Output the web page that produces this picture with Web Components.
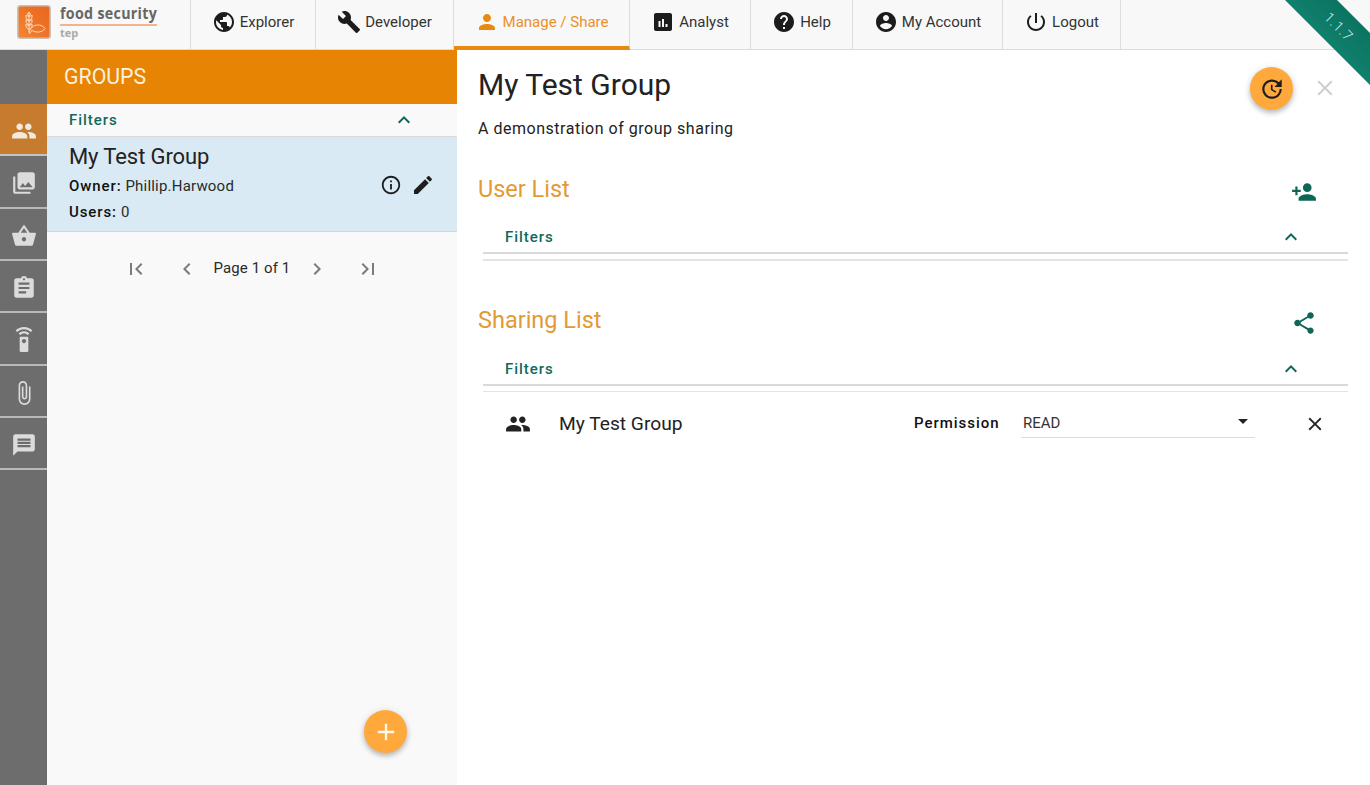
<!DOCTYPE html>
<html lang="en">
<head>
<meta charset="utf-8">
<title>Food Security TEP</title>
<style>
html,body{margin:0;padding:0;height:100%;overflow:hidden;background:#fff;font-family:Roboto,"Liberation Sans",sans-serif;color:#222}
</style>
</head>
<body>
<tep-app></tep-app>
<script>
const P={
people:'M16 11c1.66 0 2.99-1.34 2.99-3S17.66 5 16 5c-1.66 0-3 1.34-3 3s1.34 3 3 3zm-8 0c1.66 0 2.99-1.34 2.99-3S9.66 5 8 5C6.34 5 5 6.34 5 8s1.34 3 3 3zm0 2c-2.33 0-7 1.17-7 3.5V19h14v-2.5c0-2.33-4.67-3.5-7-3.5zm8 0c-.29 0-.62.02-.97.05 1.16.84 1.97 1.97 1.97 3.45V19h6v-2.5c0-2.33-4.67-3.5-7-3.5z',
public:'M12 2C6.48 2 2 6.48 2 12s4.48 10 10 10 10-4.48 10-10S17.52 2 12 2zm-1 17.93c-3.95-.49-7-3.85-7-7.93 0-.62.08-1.21.21-1.79L9 15v1c0 1.1.9 2 2 2v1.93zm6.9-2.54c-.26-.81-1-1.39-1.9-1.39h-1v-3c0-.55-.45-1-1-1H8v-2h2c.55 0 1-.45 1-1V7h2c1.1 0 2-.9 2-2v-.41c2.93 1.19 5 4.06 5 7.41 0 2.08-.8 3.97-2.1 5.39z',
build:'M22.7 19l-9.1-9.1c.9-2.3.4-5-1.5-6.9-2-2-5-2.4-7.4-1.3L9 6 6 9 1.6 4.7C.4 7.1.9 10.1 2.9 12.1c1.9 1.9 4.6 2.4 6.9 1.5l9.1 9.1c.4.4 1 .4 1.4 0l2.3-2.3c.5-.4.5-1.1.1-1.4z',
person:'M12 12c2.21 0 4-1.79 4-4s-1.79-4-4-4-4 1.79-4 4 1.79 4 4 4zm0 2c-2.67 0-8 1.34-8 4v2h16v-2c0-2.66-5.33-4-8-4z',
poll:'M19 3H5c-1.1 0-2 .9-2 2v14c0 1.1.9 2 2 2h14c1.1 0 2-.9 2-2V5c0-1.1-.9-2-2-2zM9.5 17h-2v-6h2v6zm3.5 0h-2V9h2v8zm3.5 0h-2v-3h2v3z',
help:'M12 2C6.48 2 2 6.48 2 12s4.48 10 10 10 10-4.48 10-10S17.52 2 12 2zm1 17h-2v-2h2v2zm2.07-7.75l-.9.92C13.45 12.9 13 13.5 13 15h-2v-.5c0-1.1.45-2.1 1.17-2.83l1.24-1.26c.37-.36.59-.86.59-1.41 0-1.1-.9-2-2-2s-2 .9-2 2H8c0-2.21 1.79-4 4-4s4 1.79 4 4c0 .88-.36 1.68-.93 2.25z',
account:'M12 2C6.48 2 2 6.48 2 12s4.48 10 10 10 10-4.48 10-10S17.52 2 12 2zm0 3c1.66 0 3 1.34 3 3s-1.34 3-3 3-3-1.34-3-3 1.34-3 3-3zm0 14.2c-2.5 0-4.71-1.28-6-3.22.03-1.99 4-3.08 6-3.08 1.99 0 5.97 1.09 6 3.08-1.29 1.94-3.5 3.22-6 3.22z',
power:'M13 3h-2v10h2V3zm4.83 2.17l-1.42 1.42C17.99 7.86 19 9.81 19 12c0 3.87-3.13 7-7 7s-7-3.13-7-7c0-2.19 1.01-4.14 2.58-5.42L6.17 5.17C4.23 6.82 3 9.26 3 12c0 4.97 4.03 9 9 9s9-4.03 9-9c0-2.74-1.23-5.18-3.17-6.83z',
collections:'M22 16V4c0-1.1-.9-2-2-2H8c-1.1 0-2 .9-2 2v12c0 1.1.9 2 2 2h12c1.1 0 2-.9 2-2zm-11-4l2.03 2.71L16 11l4 5H8l3-4zM2 6v14c0 1.1.9 2 2 2h14v-2H4V6H2z',
basket:'M17.21 9l-4.38-6.56c-.19-.28-.51-.42-.83-.42-.32 0-.64.14-.83.43L6.79 9H2c-.55 0-1 .45-1 1 0 .09.01.18.04.27l2.54 9.27c.23.84 1 1.46 1.92 1.46h13c.92 0 1.69-.62 1.93-1.46l2.54-9.27L23 10c0-.55-.45-1-1-1h-4.79zM9 9l3-4.4L15 9H9zm3 8c-1.1 0-2-.9-2-2s.9-2 2-2 2 .9 2 2-.9 2-2 2z',
assignment:'M19 3h-4.18C14.4 1.84 13.3 1 12 1c-1.3 0-2.4.84-2.82 2H5c-1.1 0-2 .9-2 2v14c0 1.1.9 2 2 2h14c1.1 0 2-.9 2-2V5c0-1.1-.9-2-2-2zm-7 0c.55 0 1 .45 1 1s-.45 1-1 1-1-.45-1-1 .45-1 1-1zm2 14H7v-2h7v2zm3-4H7v-2h10v2zm0-4H7V7h10v2z',
remote:'M15 9H9c-.55 0-1 .45-1 1v12c0 .55.45 1 1 1h6c.55 0 1-.45 1-1V10c0-.55-.45-1-1-1zm-3 6c-1.1 0-2-.9-2-2s.9-2 2-2 2 .9 2 2-.9 2-2 2zM7.05 6.05l1.41 1.41C9.37 6.56 10.62 6 12 6s2.63.56 3.54 1.46l1.41-1.41C15.68 4.78 13.93 4 12 4s-3.68.78-4.95 2.05zM12 0C8.96 0 6.21 1.23 4.22 3.22l1.41 1.41C7.26 3.01 9.51 2 12 2s4.74 1.01 6.36 2.64l1.41-1.41C17.79 1.23 15.04 0 12 0z',
attach:'M16.5 6v11.5c0 2.21-1.79 4-4 4s-4-1.79-4-4V5c0-1.38 1.12-2.5 2.5-2.5s2.5 1.12 2.5 2.5v10.5c0 .55-.45 1-1 1s-1-.45-1-1V6H10v9.5c0 1.38 1.12 2.5 2.5 2.5s2.5-1.12 2.5-2.5V5c0-2.21-1.79-4-4-4S7 2.79 7 5v12.5c0 3.04 2.46 5.5 5.5 5.5s5.5-2.46 5.5-5.5V6h-1.5z',
message:'M20 2H4c-1.1 0-1.99.9-1.99 2L2 22l4-4h14c1.1 0 2-.9 2-2V4c0-1.1-.9-2-2-2zm-2 12H6v-2h12v2zm0-3H6V9h12v2zm0-3H6V6h12v2z',
less:'M12 8l-6 6 1.41 1.41L12 10.83l4.59 4.58L18 14z',
info:'M11 7h2v2h-2zm0 4h2v6h-2zm1-9C6.48 2 2 6.48 2 12s4.48 10 10 10 10-4.48 10-10S17.52 2 12 2zm0 18c-4.41 0-8-3.59-8-8s3.59-8 8-8 8 3.59 8 8-3.59 8-8 8z',
edit:'M3 17.25V21h3.75L17.81 9.94l-3.75-3.75L3 17.25zM20.71 7.04c.39-.39.39-1.02 0-1.41l-2.34-2.34c-.39-.39-1.02-.39-1.41 0l-1.83 1.83 3.75 3.75 1.83-1.83z',
first:'M18.41 16.59L13.82 12l4.59-4.59L17 6l-6 6 6 6zM6 6h2v12H6z',
last:'M5.59 7.41L10.18 12l-4.59 4.59L7 18l6-6-6-6zM16 6h2v12h-2z',
prev:'M15.41 7.41L14 6l-6 6 6 6 1.41-1.41L10.83 12z',
next:'M10 6L8.59 7.41 13.17 12l-4.58 4.59L10 18l6-6z',
personadd:'M15 12c2.21 0 4-1.79 4-4s-1.79-4-4-4-4 1.79-4 4 1.79 4 4 4zm-9-2V7H4v3H1v2h3v3h2v-3h3v-2H6zm9 4c-2.67 0-8 1.34-8 4v2h16v-2c0-2.66-5.33-4-8-4z',
share:'M18 16.08c-.76 0-1.44.3-1.96.77L8.91 12.7c.05-.23.09-.46.09-.7s-.04-.47-.09-.7l7.05-4.11c.54.5 1.25.81 2.04.81 1.66 0 3-1.34 3-3s-1.34-3-3-3-3 1.34-3 3c0 .24.04.47.09.7L8.04 9.81C7.5 9.31 6.79 9 6 9c-1.66 0-3 1.34-3 3s1.34 3 3 3c.79 0 1.5-.31 2.04-.81l7.12 4.16c-.05.21-.08.43-.08.65 0 1.61 1.31 2.92 2.92 2.92 1.61 0 2.92-1.31 2.92-2.92s-1.31-2.92-2.92-2.92z',
close:'M19 6.41L17.59 5 12 10.59 6.41 5 5 6.41 10.59 12 5 17.59 6.41 19 12 13.41 17.59 19 19 17.59 13.41 12z',
add:'M19 13h-6v6h-2v-6H5v-2h6V5h2v6h6v2z',
drop:'M7 10l5 5 5-5z',
update:'M21 10.12h-6.78l2.74-2.82c-2.73-2.7-7.15-2.8-9.88-.1-2.73 2.71-2.73 7.08 0 9.79s7.15 2.71 9.88 0C18.32 15.65 19 14.08 19 12.1h2c0 1.98-.88 4.55-2.64 6.29-3.51 3.48-9.21 3.48-12.72 0-3.5-3.47-3.53-9.11-.02-12.58s9.14-3.47 12.65 0L21 3v7.12zM12.5 8v4.25l3.5 2.08-.72 1.21L11 13V8h1.5z'
};
function def(name,html,init){
  const t=document.createElement('template');t.innerHTML=html;
  customElements.define(name,class extends HTMLElement{
    connectedCallback(){
      if(this.shadowRoot)return;
      const r=this.attachShadow({mode:'open'});
      const f=t.content.cloneNode(true);
      if(init)init(this,f);
      r.appendChild(f);
    }
  });
}
def('m-icon',`<style>:host{display:inline-flex;width:var(--s,24px);height:var(--s,24px);flex:none;color:inherit}svg{width:100%;height:100%;display:block;fill:currentColor}</style><svg viewBox="0 0 24 24"><path></path></svg>`,
(h,r)=>{r.querySelector('path').setAttribute('d',P[h.getAttribute('name')]||'');});

def('tep-logo',`<style>
:host{display:flex;width:190px;height:49px;flex:none;box-sizing:border-box;padding:5px 0 0 17px;gap:9px}
svg{width:34px;height:34px;display:block;flex:none}
.t{display:flex;flex-direction:column;width:97px;margin-top:-1px}
.a{font:700 16px/19px "Open Sans",sans-serif;color:#666;white-space:nowrap;transform-origin:0 50%;transform:scaleX(.89);letter-spacing:.35px}
.r{height:2px;background:#f3b393;margin-top:1px}
.b{font:700 11px/14px "Open Sans",sans-serif;color:#aaa;margin-top:0}
</style>
<svg viewBox="0 0 34 34"><defs><linearGradient id="g" x1="1" y1="0" x2="0" y2="1"><stop offset="0" stop-color="#e8651f"/><stop offset=".5" stop-color="#ee7426"/><stop offset="1" stop-color="#f58634"/></linearGradient></defs>
<rect x=".8" y=".8" width="32.4" height="32.4" rx="2.5" fill="url(#g)" stroke="#c9c2bb" stroke-width="1.6"/>
<g fill="none" stroke="#fbd9bd" stroke-width="1"><path d="M12 7V27M12 12l-3-2v3l3 2.5M12 12l3-2v3l-3 2.5M12 16.5l-3-2v3l3 2.5M12 16.5l3-2v3l-3 2.5M12 21l-3-2v3l3 2.5M12 21l3-2v3l-3 2.5"/><path d="M12 7l-1.5 2 1.5 2 1.5-2z"/><path d="M13 25c2.5-4.5 7-6 11-4.5 2 .8 3.5 2 4 3-1.5 2.5-5 4-8.5 3.5-2-.2-3.6-.8-4.5-1.8-.8 1.3-1.5 2.8-2.5 3.3-.5-1-.6-2.4.5-3.5z"/></g></svg>
<div class="t"><div class="a">food security</div><div class="r"></div><div class="b">tep</div></div>`);

def('nav-item',`<style>
:host{display:flex;align-items:center;justify-content:center;gap:4px;box-sizing:border-box;height:49px;border-right:1px solid #dcdcdc;font:400 15px/20px Roboto,sans-serif;color:#333;flex:none;padding-bottom:5px}
:host([active]){color:#e8902a;border-bottom:4px solid #e88a12;height:50px;padding-bottom:2px;--ic:#e88a12}
m-icon{color:var(--ic,#1c1c1c)}
</style><m-icon></m-icon><slot></slot>`,(h,r)=>{r.querySelector('m-icon').setAttribute('name',h.getAttribute('icon'));});

def('top-nav',`<style>
:host{display:flex;height:50px;flex:none;background:#f8f8f8;box-sizing:border-box;border-bottom:1px solid #dcdcdc}
</style><slot></slot>`);

def('version-ribbon',`<style>
:host{position:absolute;top:0;right:0;width:85px;height:85px;overflow:hidden;pointer-events:none;display:block}
.b{position:absolute;inset:0;clip-path:polygon(0 0,52px 0,85px 33px,85px 85px);background:linear-gradient(45deg,#15907a,#0a6e5c)}
.t{position:absolute;left:37px;top:17px;width:32px;text-align:center;transform:rotate(45deg);font:300 14px/18px Roboto,sans-serif;color:#e3f0ed;letter-spacing:.8px}
</style><div class="b"></div><div class="t"><slot></slot></div>`);

def('rail-item',`<style>
:host{display:flex;align-items:center;justify-content:center;box-sizing:border-box;height:52.33px;padding-top:4px;border-bottom:2px solid #b9b9b9;color:#dcdcdc;--s:26px}
:host([active]){background:#c77b2e;color:#f3eadf;border-bottom-color:#c3c3c3}
:host([blank]){height:54px;border:0;padding:0}
</style><slot></slot>`);
def('side-rail',`<style>:host{display:flex;flex-direction:column;width:47px;flex:none;background:#6d6d6d}</style><slot></slot>`);

def('filter-bar',`<style>
:host{display:flex;align-items:center;box-sizing:border-box;height:var(--h,33px);padding:var(--pt,0) var(--pr,41px) 0 var(--pl,22px);border-bottom:var(--bb,1px) solid #d9d9d9;font:500 15px/20px Roboto,sans-serif;letter-spacing:.95px;color:#12695b}
span{flex:1}
m-icon{color:#0d6656;--s:24px}
</style><span><slot></slot></span><m-icon name="less"></m-icon>`);

def('group-card',`<style>
:host{display:flex;align-items:center;box-sizing:border-box;height:95px;background:#d9eaf5;border-bottom:1px solid #cfd6da;padding:0 22px;color:#1e1e1e}
.m{flex:1;min-width:0;padding-top:4px}
.t{font:400 22px/26px Roboto,sans-serif;margin-top:-7px;letter-spacing:-.1px;color:#222}
.l{font:400 15px/20px Roboto,sans-serif;letter-spacing:.2px;margin-top:6px;color:#2a2a2a}
.l+.l{margin-top:6px}
b{font-weight:500;letter-spacing:.9px;color:#111}
.a{display:flex;gap:8px;margin-top:1px}
.a m-icon:first-child{--s:22px;margin:1px 1px 0 1px}
</style>
<div class="m"><div class="t"><slot name="title"></slot></div><div class="l"><b>Owner:</b> <slot name="owner"></slot></div><div class="l"><b>Users:</b> <slot name="users"></slot></div></div>
<div class="a"><m-icon name="info"></m-icon><m-icon name="edit"></m-icon></div>`);

def('page-nav',`<style>
:host{display:flex;align-items:center;height:24px;margin-top:25px;padding-left:77px;font:400 15px/20px Roboto,sans-serif;color:#2a2a2a;letter-spacing:.1px}
m-icon{color:#7b7b7b}
span{width:106px;text-align:center;margin:-3px 0 0;white-space:nowrap}
.g{width:27px}
</style><m-icon name="first"></m-icon><div class="g"></div><m-icon name="prev"></m-icon><span><slot></slot></span><m-icon name="next"></m-icon><div class="g"></div><m-icon name="last"></m-icon>`);

def('fab-button',`<style>
:host{display:flex;align-items:center;justify-content:center;width:43px;height:43px;border-radius:50%;background:#ffa93c;box-shadow:0 3px 5px rgba(0,0,0,.22),0 1px 8px rgba(0,0,0,.1);flex:none;color:var(--fc,#1e1e1e)}
</style><slot></slot>`);

def('groups-panel',`<style>
:host{display:flex;flex-direction:column;position:relative;width:410px;flex:none;background:#f9f9f9}
.h{height:54px;box-sizing:border-box;background:#e88403;color:#fdf0dc;font:400 21.3px/54px Roboto,sans-serif;padding-left:17px;flex:none}
.add{position:absolute;left:317px;top:660px;--fc:#fff8ee;--s:28px}
</style><div class="h">GROUPS</div><filter-bar>Filters</filter-bar>
<group-card><span slot="title">My Test Group</span><span slot="owner">Phillip.Harwood</span><span slot="users">0</span></group-card>
<page-nav>Page 1 of 1</page-nav>
<fab-button class="add"><m-icon name="add"></m-icon></fab-button>`);

def('section-head',`<style>
:host{display:flex;align-items:center;height:36px;font:400 23.5px/36px Roboto,sans-serif;color:#e39a35;padding-right:31px}
span{flex:1}
m-icon{color:#0d6656;--s:26px;margin-top:6px}
</style><span><slot></slot></span><m-icon></m-icon>`,(h,r)=>r.querySelector('m-icon').setAttribute('name',h.getAttribute('icon')));

def('list-section',`<style>
:host{display:block;margin-top:var(--mt,30px)}
.b{margin-left:5px;--h:var(--fh,47px);--pt:16px;--pr:45px;--bb:2px;--pl:22px}
.rule{height:var(--rh,2px);background:#e3e3e3;margin:var(--rm,5px) 0 0 5px}
</style><section-head></section-head><filter-bar class="b">Filters</filter-bar><div class="rule"></div><slot></slot>`,
(h,r)=>{const s=r.querySelector('section-head');s.setAttribute('icon',h.getAttribute('icon'));s.textContent=h.getAttribute('label');});

def('share-row',`<style>
:host{display:flex;align-items:center;height:62px;margin-left:5px;font:400 19.2px/28px Roboto,sans-serif;color:#222}
.ic{margin-left:22px;width:54px;display:flex;color:#222;--s:26px}
.n{width:355px}
.p{font:500 15px/20px Roboto,sans-serif;letter-spacing:.98px;color:#111;width:107px;margin-top:-1px}
.s{width:234px;height:29px;box-sizing:border-box;border-bottom:1px solid #dcdcdc;display:flex;align-items:center;font:400 15px/20px Roboto,sans-serif;color:#333;padding-left:2px}
.s span{flex:1}
.s m-icon{margin-top:-4px;color:#222}
.x{margin-left:49px;color:#222;--s:22px}
</style><div class="ic"><m-icon name="people"></m-icon></div><div class="n"><slot></slot></div><div class="p">Permission</div><div class="s"><span>READ</span><m-icon name="drop"></m-icon></div><m-icon class="x" name="close"></m-icon>`);

def('detail-pane',`<style>
:host{display:block;flex:1;min-width:0;position:relative;background:#fff;padding:13px 22px 0 21px;box-sizing:border-box}
.t{font:400 30px/44px Roboto,sans-serif;color:#222}
.d{font:400 16px/24px Roboto,sans-serif;margin-top:9.5px;letter-spacing:.52px;color:#222}
.acts{position:absolute;top:17px;left:793px;display:flex;align-items:center;gap:19px}
.x{color:#cfcfcf;--s:26px;margin-top:-2px}
.ref{--s:26px}
</style>
<div class="t">My Test Group</div><div class="d">A demonstration of group sharing</div>
<div class="acts"><fab-button class="ref"><m-icon name="update"></m-icon></fab-button><m-icon class="x" name="close"></m-icon></div>
<list-section label="User List" icon="personadd"></list-section>
<list-section label="Sharing List" icon="share" style="--mt:41px;--fh:48px;--rh:1px"><share-row style="margin-top:1px">My Test Group</share-row></list-section>`);

def('tep-app',`<style>
:host{display:flex;flex-direction:column;width:1370px;height:785px;position:relative;overflow:hidden}
.m{display:flex;flex:1;min-height:0}
</style>
<top-nav>
<tep-logo></tep-logo>
<nav-item icon="public" style="width:126px;border-left:1px solid #dcdcdc">Explorer</nav-item>
<nav-item icon="build" style="width:138px">Developer</nav-item>
<nav-item icon="person" active style="width:176px">Manage / Share</nav-item>
<nav-item icon="poll" style="width:121px">Analyst</nav-item>
<nav-item icon="help" style="width:102px">Help</nav-item>
<nav-item icon="account" style="width:150px">My Account</nav-item>
<nav-item icon="power" style="width:118px">Logout</nav-item>
</top-nav>
<div class="m">
<side-rail>
<rail-item blank></rail-item>
<rail-item active><m-icon name="people"></m-icon></rail-item>
<rail-item><m-icon name="collections"></m-icon></rail-item>
<rail-item><m-icon name="basket"></m-icon></rail-item>
<rail-item><m-icon name="assignment"></m-icon></rail-item>
<rail-item><m-icon name="remote"></m-icon></rail-item>
<rail-item><m-icon name="attach"></m-icon></rail-item>
<rail-item><m-icon name="message"></m-icon></rail-item>
</side-rail>
<groups-panel></groups-panel>
<detail-pane></detail-pane>
</div>
<version-ribbon>1.1.7</version-ribbon>`);
</script>
</body>
</html>
